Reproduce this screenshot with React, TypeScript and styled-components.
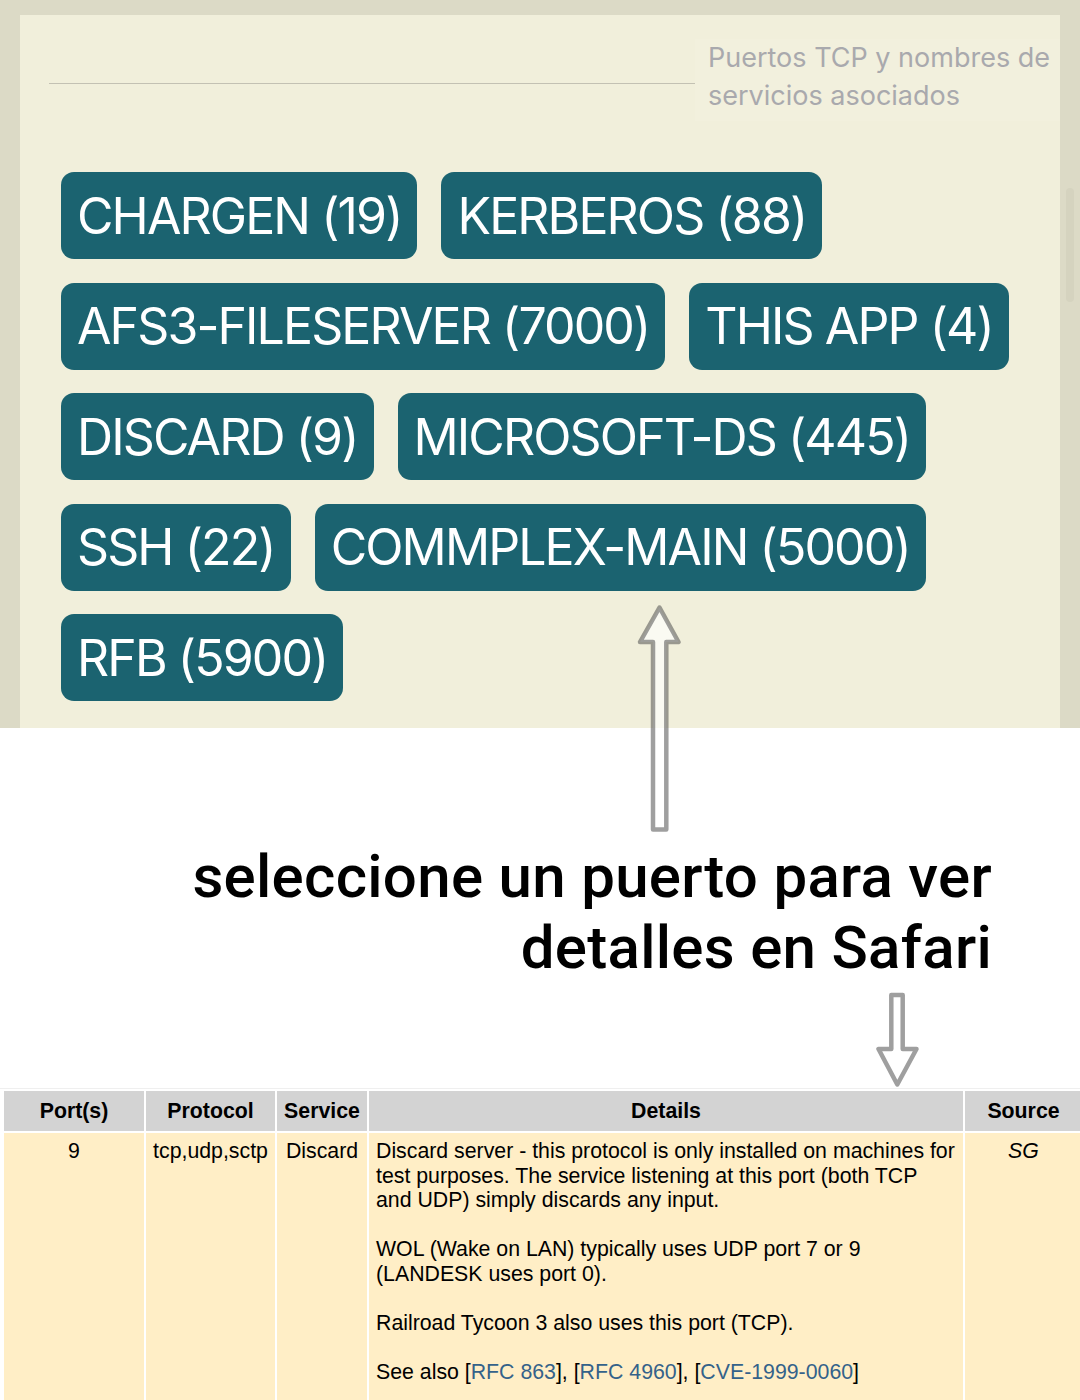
import React from "react";
import styled, { createGlobalStyle } from "styled-components";

const GlobalStyle = createGlobalStyle`
  html, body {
    margin: 0;
    padding: 0;
    background: #ffffff;
  }
  body {
    width: 1080px;
    overflow-x: hidden;
    font-family: Inter, "Noto Sans", sans-serif;
  }
`;

const Page = styled.div`
  position: relative;
  width: 1080px;
  height: 1400px;
  overflow: hidden;
  background: #ffffff;
`;

const Shot = styled.section`
  display: flex;
  height: 728px;
  box-sizing: border-box;
  padding: 15px 0 0 20px;
  background: #dcdac6;
`;

const Panel = styled.div`
  flex: 1;
  display: flex;
  flex-direction: column;
  background: #f1efdb;
`;

const ScrollTrack = styled.div`
  flex: none;
  width: 20px;
  display: flex;
  justify-content: center;
`;

const ScrollThumb = styled.div`
  margin-top: 173px;
  width: 8px;
  height: 114px;
  border-radius: 4px;
  background: #d5d3bf;
`;

const HeaderRow = styled.div`
  display: flex;
  align-items: flex-start;
  margin-top: 24px;
  padding-left: 29px;
`;

const Rule = styled.div`
  flex: 1;
  height: 1px;
  margin-top: 44px;
  background: #c3c1b3;
`;

const Subtitle = styled.div`
  flex: none;
  width: 352px;
  height: 82px;
  padding-left: 13px;
  background: #f2f0dd;
  color: #a9a9ad;
  font-family: Inter, "Noto Sans", sans-serif;
  font-size: 27px;
  line-height: 38px;
`;

const PortList = styled.div`
  display: flex;
  flex-wrap: wrap;
  gap: 23.5px 24px;
  margin-top: 51px;
  padding-left: 41px;
`;

const PortButton = styled.button`
  display: flex;
  align-items: center;
  height: 87px;
  padding: 0 16px;
  border: none;
  border-radius: 13px;
  background: #1b6370;
  color: #ffffff;
  font-family: Inter, "Noto Sans", sans-serif;
  font-size: 50px;
  font-weight: 400;
  letter-spacing: -1.9px;
  white-space: nowrap;
  cursor: pointer;
`;

const Caption = styled.p`
  margin: 113px 88px 0 0;
  text-align: right;
  font-family: Roboto, "Noto Sans", sans-serif;
  font-weight: 500;
  font-size: 60px;
  line-height: 71px;
  letter-spacing: 0.3px;
  color: #000000;
`;

const TableWrap = styled.div`
  margin-top: 105px;
  padding-left: 2px;
  border-top: 1px solid #efefef;
`;

const PortTable = styled.table`
  width: 1082px;
  table-layout: fixed;
  border-collapse: separate;
  border-spacing: 2px;
  font-family: "Liberation Sans", Arial, sans-serif;
  font-size: 21.3px;
  line-height: 24.5px;
  color: #000000;
`;

const HeadCell = styled.th`
  padding: 7.75px 7px;
  background: #d3d3d3;
  font-weight: 700;
  text-align: center;
`;

const Cell = styled.td<{ $align?: "left" | "center"; $italic?: boolean }>`
  height: 300px;
  padding: 6px 7px;
  vertical-align: top;
  background: #ffeec6;
  text-align: ${(p) => p.$align ?? "center"};
  font-style: ${(p) => (p.$italic ? "italic" : "normal")};
`;

const Para = styled.p`
  margin: 0 0 24.5px;
`;

const RefLink = styled.a`
  color: #34628a;
  text-decoration: none;
`;

const ArrowSvg = styled.svg<{ $left: number; $top: number }>`
  position: absolute;
  left: ${(p) => p.$left}px;
  top: ${(p) => p.$top}px;
  overflow: visible;
  pointer-events: none;
`;

const ports = [
  "CHARGEN (19)",
  "KERBEROS (88)",
  "AFS3-FILESERVER (7000)",
  "THIS APP (4)",
  "DISCARD (9)",
  "MICROSOFT-DS (445)",
  "SSH (22)",
  "COMMPLEX-MAIN (5000)",
  "RFB (5900)",
];

export default function App() {
  return (
    <Page>
      <GlobalStyle />
      <Shot>
        <Panel>
          <HeaderRow>
            <Rule />
            <Subtitle>
              Puertos TCP y nombres de
              <br />
              servicios asociados
            </Subtitle>
          </HeaderRow>
          <PortList>
            {ports.map((p) => (
              <PortButton key={p}>{p}</PortButton>
            ))}
          </PortList>
        </Panel>
        <ScrollTrack>
          <ScrollThumb />
        </ScrollTrack>
      </Shot>

      <Caption>
        seleccione un puerto para ver
        <br />
        detalles en Safari
      </Caption>

      <TableWrap>
        <PortTable>
          <colgroup>
            <col style={{ width: 140 }} />
            <col style={{ width: 129 }} />
            <col style={{ width: 90 }} />
            <col style={{ width: 594 }} />
            <col style={{ width: 117 }} />
          </colgroup>
          <thead>
            <tr>
              <HeadCell>Port(s)</HeadCell>
              <HeadCell>Protocol</HeadCell>
              <HeadCell>Service</HeadCell>
              <HeadCell>Details</HeadCell>
              <HeadCell>Source</HeadCell>
            </tr>
          </thead>
          <tbody>
            <tr>
              <Cell>9</Cell>
              <Cell>tcp,udp,sctp</Cell>
              <Cell>Discard</Cell>
              <Cell $align="left">
                <Para>
                  Discard server - this protocol is only installed on machines for
                  test purposes. The service listening at this port (both TCP
                  and UDP) simply discards any input.
                </Para>
                <Para>
                  WOL (Wake on LAN) typically uses UDP port 7 or 9
                  <br />
                  (LANDESK uses port 0).
                </Para>
                <Para>Railroad Tycoon 3 also uses this port (TCP).</Para>
                <Para>
                  See also [<RefLink href="#">RFC 863</RefLink>], [
                  <RefLink href="#">RFC 4960</RefLink>], [
                  <RefLink href="#">CVE-1999-0060</RefLink>]
                </Para>
              </Cell>
              <Cell $italic>SG</Cell>
            </tr>
          </tbody>
        </PortTable>
      </TableWrap>

      <ArrowSvg $left={636} $top={602} width="48" height="232" viewBox="0 0 48 232">
        <path
          d="M23.5 5.5 L42.5 40 L30.3 40 L30.3 227.5 L17 227.5 L17 40 L4 40 Z"
          fill="rgba(255,255,255,0.65)"
          stroke="rgba(80,80,80,0.55)"
          strokeWidth="4.5"
          strokeLinejoin="round"
        />
      </ArrowSvg>

      <ArrowSvg $left={872} $top={989} width="50" height="102" viewBox="0 0 50 102">
        <path
          d="M19.3 6 L30.7 6 L30.7 60 L44.5 60 L25.3 95.5 L6.5 60 L19.3 60 Z"
          fill="#ffffff"
          stroke="rgba(80,80,80,0.55)"
          strokeWidth="4.5"
          strokeLinejoin="round"
        />
      </ArrowSvg>
    </Page>
  );
}
